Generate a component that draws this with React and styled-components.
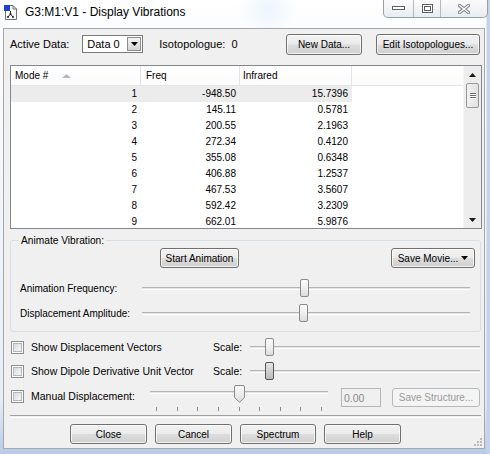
import React from 'react';
import styled, { createGlobalStyle } from 'styled-components';

const Global = createGlobalStyle`
  html, body { margin: 0; padding: 0; }
  body {
    width: 490px; height: 454px; overflow: hidden; background: #fff;
    font-family: "Liberation Sans", Arial, sans-serif;
  }
`;

const FONT = `"Liberation Sans", Arial, sans-serif`;

const Frame = styled.div`
  width: 490px; height: 454px; box-sizing: border-box;
  display: flex; flex-direction: column;
  background:
    linear-gradient(90deg, rgba(255,255,255,0) 486px, #c4d2ee 487px),
    linear-gradient(180deg, #ffffff 0px, #fbfcfe 30px, #e6eef8 400px, #b8c9e8 454px);
`;

const TitleBar = styled.div`
  height: 28px; flex: none;
  display: flex; align-items: flex-start;
  background: radial-gradient(ellipse 30px 26px at 268px 8px, rgba(215,233,250,0.45), rgba(255,255,255,0));
`;

const AppIconBox = styled.div`
  margin: 5px 0 0 4px; width: 13px; height: 15px;
`;

const Title = styled.div`
  margin: 5px 0 0 8px;
  font: 12px/15px ${FONT};
  color: #000;
  white-space: nowrap;
`;

const Captions = styled.div`
  margin-left: auto; margin-right: 2px;
  display: flex; height: 18px; box-sizing: border-box;
  border: 1px solid #9a9ea6; border-top: none;
  border-radius: 0 0 5px 5px;
  overflow: hidden;
  background: linear-gradient(#fbfbfb, #e9ecf0);
`;

const CapBtn = styled.div`
  width: ${p => p.$w}px; height: 100%;
  display: flex; align-items: center; justify-content: center;
  border-left: ${p => (p.$first ? 'none' : '1px solid #b5b9bf')};
`;

const Client = styled.div`
  flex: 1; margin: 0 5px 5px 3px;
  border: 1px solid #a7a7a7;
  background: #f0f0f0;
  display: flex; flex-direction: column;
  padding: 4px 2px 0 6px;
  position: relative;
  font: 10px ${FONT};
  color: #000;
`;

const TopRow = styled.div`
  height: 22px; display: flex; align-items: center;
  font-size: 11px;
`;

const Label = styled.span`
  white-space: nowrap;
  margin-left: ${p => p.$ml || 0}px;
`;

const Combo = styled.div`
  margin-left: 13px; width: 61px; height: 18px; box-sizing: border-box;
  border: 1px solid #7a7a7a; background: #fff;
  display: flex; align-items: center;
  padding-left: 4px;
  font-size: 11px;
`;

const ComboBtn = styled.div`
  margin-left: auto; width: 14px; height: 14px; margin-right: 1px;
  box-sizing: border-box;
  border: 1px solid #8c8c8c;
  background: linear-gradient(#f4f4f4, #d4d4d4);
  display: flex; align-items: center; justify-content: center;
`;

const Button = styled.button`
  box-sizing: border-box;
  width: ${p => p.$w}px; height: ${p => p.$h || 20}px;
  margin-left: ${p => (p.$auto ? 'auto' : `${p.$ml || 0}px`)};
  margin-right: ${p => p.$mr || 0}px;
  margin-top: ${p => p.$mt || 0}px;
  padding: 0;
  font: 10px ${FONT};
  color: ${p => (p.disabled ? '#9a9a9a' : '#000')};
  border: 1px solid ${p => (p.disabled ? '#b5b9bc' : '#707070')};
  border-radius: 3px;
  background: ${p => (p.disabled
    ? '#f4f4f4'
    : 'linear-gradient(#f2f2f2 0%, #ebebeb 48%, #dddddd 52%, #cfcfcf 100%)')};
  box-shadow: ${p => (p.disabled ? 'none' : 'inset 0 0 0 1px rgba(255,255,255,0.75)')};
  display: flex; align-items: center; justify-content: center; gap: 3px;
  flex: none;
`;

const List = styled.div`
  margin-top: 10px; width: 472px; height: 164px; box-sizing: border-box;
  border: 1px solid #828790; background: #fff;
  display: flex;
`;

const ListBody = styled.div`
  flex: 1; overflow: hidden;
`;

const cols = '130px 99px 112px 1fr';

const Header = styled.div`
  display: grid; grid-template-columns: ${cols};
  height: 20px; box-sizing: border-box;
  border-bottom: 1px solid #e5e5e5;
  background: linear-gradient(#ffffff, #fbfbfc);
`;

const HeadCell = styled.div`
  border-right: ${p => (p.$last ? 'none' : '1px solid #e3e4e8')};
  padding-left: ${p => p.$pl || 5}px;
  line-height: 19px;
  display: flex; align-items: center; gap: 14px;
  white-space: nowrap;
`;

const Row = styled.div`
  display: grid; grid-template-columns: ${cols};
  height: 16px; line-height: 16px;
`;

const Cell = styled.div`
  text-align: right; padding-right: 4px;
  background: ${p => (p.$sel ? '#ececec' : 'transparent')};
`;

const ScrollBar = styled.div`
  width: 17px; flex: none;
  background: #ededed;
  border-left: 1px solid #f5f5f5;
  display: flex; flex-direction: column; align-items: center;
`;

const ScrollArrow = styled.div`
  height: 17px; width: 100%;
  display: flex; align-items: center; justify-content: center;
`;

const ScrollSpace = styled.div`
  flex: 1;
`;

const ScrollThumb = styled.div`
  width: 13px; height: 25px; box-sizing: border-box;
  border: 1px solid #979797; border-radius: 2px;
  background: linear-gradient(90deg, #f1f1f1, #e2e2e2);
  display: flex; flex-direction: column; align-items: center; justify-content: center; gap: 1px;
`;

const Grip = styled.div`
  width: 6px; height: 1px; background: #6b6b6b;
  box-shadow: 0 1px 0 #fff;
`;

const Group = styled.div`
  margin-top: 11px; width: 471px; height: 92px; box-sizing: border-box;
  border: 1px solid #d5dfe5; border-radius: 3px;
  position: relative;
  padding-top: 7px;
  display: flex; flex-direction: column;
`;

const GroupLabel = styled.span`
  position: absolute; top: -7px; left: 8px;
  padding: 0 2px; background: #f0f0f0;
  font-size: 10.2px; line-height: 13px;
`;

const GroupBtnRow = styled.div`
  display: flex; height: 20px;
`;

const SliderRow = styled.div`
  display: grid; grid-template-columns: 131px 328px;
  align-items: center; height: 20px;
  margin-top: ${p => p.$mt}px;
`;

const RowLabel = styled.span`
  padding-left: 9px; white-space: nowrap;
`;

const SliderBox = styled.div`
  position: relative; width: ${p => p.$w}px; height: ${p => p.$h || 20}px;
`;

const Track = styled.div`
  margin: ${p => p.$top}px 0 0;
  height: 1px;
  border-top: 1px solid #b4b4b4;
  border-bottom: 1px solid #ffffff;
  background: #e3e3e3;
`;

const Thumb = styled.div`
  position: absolute; top: ${p => p.$top}px;
  width: 9px; height: 18px; box-sizing: border-box;
  border: 1px solid ${p => (p.$dark ? '#555' : '#8a8a8a')};
  border-radius: 2px;
  background: ${p => (p.$dark
    ? 'linear-gradient(#e6e6e6 0%, #d0d0d0 50%, #bdbdbd 100%)'
    : 'linear-gradient(#fbfbfb 0%, #f0f0f0 50%, #dcdcdc 100%)')};
`;

const PointerThumb = styled.svg`
  position: absolute; top: ${p => p.$top}px;
`;

const Ticks = styled.div`
  display: flex; justify-content: space-between;
  margin: 13px 6px 0;
`;

const Tick = styled.div`
  width: 1px; height: 4px; background: #8a8a8a;
`;

const CheckRow = styled.div`
  display: grid; grid-template-columns: ${p => p.$cols};
  align-items: ${p => p.$align || 'center'};
  height: ${p => p.$h || 20}px;
  margin-top: ${p => p.$mt}px;
`;

const CheckLabel = styled.label`
  display: flex; align-items: center; gap: 7px;
  padding-left: 1px; height: 20px;
  font-size: 10.5px; white-space: nowrap;
`;

const Box = styled.span`
  width: 13px; height: 13px; box-sizing: border-box; flex: none;
  border: 1px solid #8e8f8f; background: #fff;
  display: flex; align-items: center; justify-content: center;
  &::after {
    content: ''; width: 9px; height: 9px; box-sizing: border-box;
    border: 1px solid #b4b7bb;
    background: linear-gradient(135deg, #d8dadd, #f7f7f7);
  }
`;

const ScaleLabel = styled.span`
  font-size: 10.5px;
`;

const TextBox = styled.div`
  width: 40px; height: 19px; box-sizing: border-box;
  margin-top: 2px; margin-left: 13px;
  border: 1px solid #b3b6ba; background: #f0f0f0;
  color: #8c8c8c; font-size: 10.5px;
  padding-left: 2px; display: flex; align-items: center;
`;

const Separator = styled.div`
  margin-top: 1px; width: 471px; height: 1px;
  border-top: 1px solid #a0a0a0; border-bottom: 1px solid #ffffff;
`;

const BottomRow = styled.div`
  margin-top: 6px; display: flex; gap: 8px; padding-left: 60px;
`;

const ResizeGrip = styled.svg`
  position: absolute; right: 2px; bottom: 2px;
`;

const rows = [
  ['1', '-948.50', '15.7396'],
  ['2', '145.11', '0.5781'],
  ['3', '200.55', '2.1963'],
  ['4', '272.34', '0.4120'],
  ['5', '355.08', '0.6348'],
  ['6', '406.88', '1.2537'],
  ['7', '467.53', '3.5607'],
  ['8', '592.42', '3.2309'],
  ['9', '662.01', '5.9876'],
];

function Slider({ width, value, margin = 5, dark, trackTop = 9 }) {
  const center = margin + value * (width - 2 * margin);
  return (
    <SliderBox $w={width}>
      <Track $top={trackTop} />
      <Thumb $top={1} $dark={dark} style={{ left: Math.round(center - 4.5) }} />
    </SliderBox>
  );
}

function TickSlider({ width, value }) {
  const margin = 6;
  const center = margin + value * (width - 2 * margin);
  return (
    <SliderBox $w={width} $h={28}>
      <Track $top={5} />
      <PointerThumb $top={-1} width="11" height="18" viewBox="0 0 11 18" style={{ left: Math.round(center - 5.5) }}>
        <defs>
          <linearGradient id="pt" x1="0" y1="0" x2="0" y2="1">
            <stop offset="0" stopColor="#fbfbfb" />
            <stop offset="1" stopColor="#dcdcdc" />
          </linearGradient>
        </defs>
        <path d="M0.5 2 Q0.5 0.5 2 0.5 H9 Q10.5 0.5 10.5 2 V12.5 L5.5 17.3 L0.5 12.5 Z" fill="url(#pt)" stroke="#8a8a8a" />
      </PointerThumb>
      <Ticks>
        {Array.from({ length: 9 }).map((_, i) => <Tick key={i} />)}
      </Ticks>
    </SliderBox>
  );
}

const DownTri = ({ c = '#000' }) => (
  <svg width="7" height="4" viewBox="0 0 7 4"><path d="M0 0 H7 L3.5 4 Z" fill={c} /></svg>
);

export default function App() {
  return (
    <>
      <Global />
      <Frame>
        <TitleBar>
          <AppIconBox>
            <svg width="13" height="15" viewBox="0 0 13 15">
              <path d="M1.5 0.5 H9 L12.5 4 V14.5 H1.5 Z" fill="#fff" stroke="#6f6f6f" />
              <path d="M9 0.5 V4 H12.5" fill="none" stroke="#6f6f6f" />
              <rect x="0" y="0" width="6" height="6" fill="#1c3fd8" />
              <path d="M6.5 6 V9 M6.5 9 L4 12 M6.5 9 L9 12" stroke="#222" strokeWidth="1" fill="none" />
              <circle cx="6.5" cy="9" r="1" fill="#222" />
              <circle cx="4" cy="12" r="1" fill="#222" />
              <circle cx="9" cy="12" r="1" fill="#222" />
            </svg>
          </AppIconBox>
          <Title>G3:M1:V1 - Display Vibrations</Title>
          <Captions>
            <CapBtn $w={29} $first>
              <svg width="13" height="5" viewBox="0 0 13 5">
                <rect x="0.5" y="0.5" width="12" height="3" fill="#fff" stroke="#5d6166" />
              </svg>
            </CapBtn>
            <CapBtn $w={26}>
              <svg width="11" height="9" viewBox="0 0 11 9">
                <rect x="0.5" y="0.5" width="10" height="8" fill="#fff" stroke="#5d6166" />
                <rect x="2.5" y="2.5" width="6" height="4" fill="none" stroke="#5d6166" />
              </svg>
            </CapBtn>
            <CapBtn $w={46}>
              <svg width="12" height="10" viewBox="0 0 12 10">
                <path d="M1.5 1.5 L10.5 8.5 M10.5 1.5 L1.5 8.5" stroke="#7d8187" strokeWidth="3.4" strokeLinecap="square" />
                <path d="M1.5 1.5 L10.5 8.5 M10.5 1.5 L1.5 8.5" stroke="#fff" strokeWidth="1.4" strokeLinecap="square" />
              </svg>
            </CapBtn>
          </Captions>
        </TitleBar>

        <Client>
          <TopRow>
            <Label>Active Data:</Label>
            <Combo>
              Data 0
              <ComboBtn><DownTri /></ComboBtn>
            </Combo>
            <Label $ml={16}>Isotopologue:&nbsp; 0</Label>
            <Button $auto $w={76} $h={21}>New Data...</Button>
            <Button $ml={14} $mr={2} $w={104} $h={21}>Edit Isotopologues...</Button>
          </TopRow>

          <List>
            <ListBody>
              <Header>
                <HeadCell $pl={4}>
                  Mode #
                  <svg width="9" height="4" viewBox="0 0 9 4"><path d="M0 4 L4.5 0 L9 4 Z" fill="#b4b8bd" /></svg>
                </HeadCell>
                <HeadCell>Freq</HeadCell>
                <HeadCell $pl={3}>Infrared</HeadCell>
                <HeadCell $last />
              </Header>
              {rows.map((r, i) => (
                <Row key={r[0]}>
                  <Cell $sel={i === 0}>{r[0]}</Cell>
                  <Cell $sel={i === 0}>{r[1]}</Cell>
                  <Cell $sel={i === 0}>{r[2]}</Cell>
                  <div />
                </Row>
              ))}
            </ListBody>
            <ScrollBar>
              <ScrollArrow>
                <svg width="7" height="4" viewBox="0 0 7 4"><path d="M0 4 L3.5 0 L7 4 Z" fill="#1a1a1a" /></svg>
              </ScrollArrow>
              <ScrollThumb><Grip /><Grip /><Grip /></ScrollThumb>
              <ScrollSpace />
              <ScrollArrow>
                <DownTri c="#1a1a1a" />
              </ScrollArrow>
            </ScrollBar>
          </List>

          <Group>
            <GroupLabel>Animate Vibration:</GroupLabel>
            <GroupBtnRow>
              <Button $ml={149} $w={79}>Start Animation</Button>
              <Button $auto $mr={5} $w={84}>Save Movie... <DownTri /></Button>
            </GroupBtnRow>
            <SliderRow $mt={10}>
              <RowLabel>Animation Frequency:</RowLabel>
              <Slider width={328} value={0.494} />
            </SliderRow>
            <SliderRow $mt={5}>
              <RowLabel>Displacement Amplitude:</RowLabel>
              <Slider width={328} value={0.491} />
            </SliderRow>
          </Group>

          <CheckRow $cols="203px 37px 230px" $mt={5}>
            <CheckLabel><Box />Show Displacement Vectors</CheckLabel>
            <ScaleLabel>Scale:</ScaleLabel>
            <Slider width={230} value={0.068} />
          </CheckRow>
          <CheckRow $cols="203px 37px 230px" $mt={4}>
            <CheckLabel><Box />Show Dipole Derivative Unit Vector</CheckLabel>
            <ScaleLabel>Scale:</ScaleLabel>
            <Slider width={230} value={0.068} dark />
          </CheckRow>
          <CheckRow $cols="140px 178px 53px 112px" $align="start" $h={28} $mt={5}>
            <CheckLabel><Box />Manual Displacement:</CheckLabel>
            <TickSlider width={178} value={0.5} />
            <TextBox>0.00</TextBox>
            <Button disabled $ml={11} $mt={2} $w={88} $h={19}>Save Structure...</Button>
          </CheckRow>

          <Separator />

          <BottomRow>
            <Button $w={77}>Close</Button>
            <Button $w={77}>Cancel</Button>
            <Button $w={76}>Spectrum</Button>
            <Button $w={77}>Help</Button>
          </BottomRow>

          <ResizeGrip width="8" height="8" viewBox="0 0 8 8">
            {[[6, 0], [6, 3], [3, 3], [6, 6], [3, 6], [0, 6]].map(([x, y], i) => (
              <rect key={i} x={x} y={y} width="2" height="2" fill="#b9b9b9" />
            ))}
          </ResizeGrip>
        </Client>
      </Frame>
    </>
  );
}
